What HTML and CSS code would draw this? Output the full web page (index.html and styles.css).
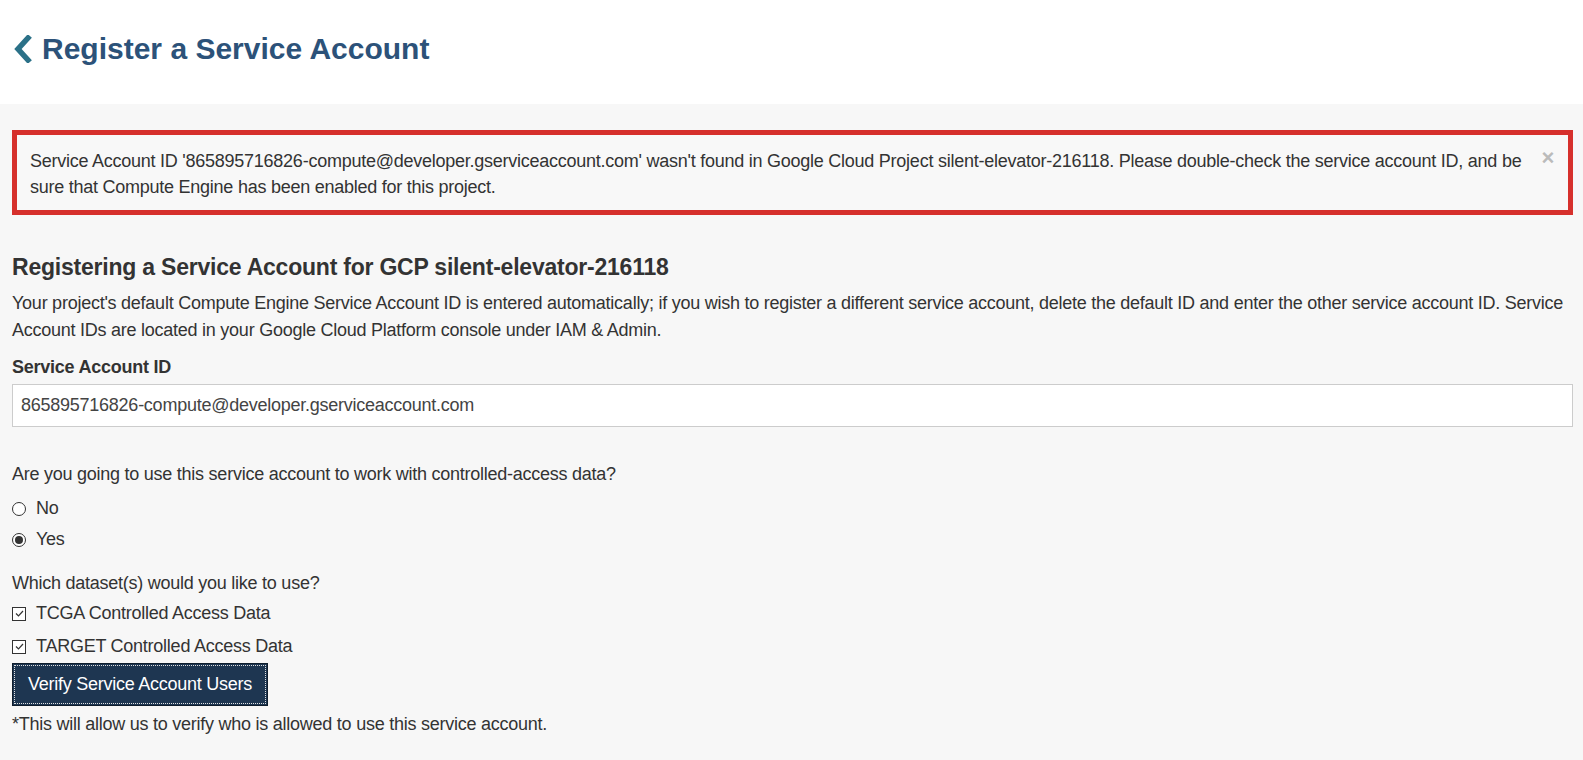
FILE: index.html
```html
<!DOCTYPE html>
<html>
<head>
<meta charset="utf-8">
<link rel="stylesheet" href="styles.css">
</head>
<body>
<header class="page-header">
  <a class="back" href="#"><svg width="20" height="28" viewBox="0 0 20 28"><polyline points="15,3 5,14 15,25" fill="none" stroke="#2b7188" stroke-width="5.5" stroke-linecap="square"/></svg></a>
  <h1 class="title">Register a Service Account</h1>
</header>
<main class="content">
  <div class="alert">
    <div class="alert-text">Service Account ID '865895716826-compute@developer.gserviceaccount.com' wasn't found in Google Cloud Project silent-elevator-216118. Please double-check the service account ID, and be sure that Compute Engine has been enabled for this project.</div>
    <span class="close">&times;</span>
  </div>
  <h2 class="section-title">Registering a Service Account for GCP silent-elevator-216118</h2>
  <p class="intro">Your project's default Compute Engine Service Account ID is entered automatically; if you wish to register a different service account, delete the default ID and enter the other service account ID. Service Account IDs are located in your Google Cloud Platform console under IAM &amp; Admin.</p>
  <label class="field-label">Service Account ID</label>
  <div class="input">865895716826-compute@developer.gserviceaccount.com</div>
  <p class="question">Are you going to use this service account to work with controlled-access data?</p>
  <div class="option first"><span class="radio"></span>No</div>
  <div class="option"><span class="radio checked"></span>Yes</div>
  <p class="question q2">Which dataset(s) would you like to use?</p>
  <div class="option"><span class="check"><svg width="11" height="11" viewBox="0 0 11 11"><polyline points="2,5.5 4.5,8 9,3" fill="none" stroke="#333" stroke-width="1.2"/></svg></span>TCGA Controlled Access Data</div>
  <div class="option last"><span class="check"><svg width="11" height="11" viewBox="0 0 11 11"><polyline points="2,5.5 4.5,8 9,3" fill="none" stroke="#333" stroke-width="1.2"/></svg></span>TARGET Controlled Access Data</div>
  <button class="btn">Verify Service Account Users</button>
  <p class="note">*This will allow us to verify who is allowed to use this service account.</p>
</main>
</body>
</html>
```
FILE: styles.css
```css
html, body {
  margin: 0;
  padding: 0;
}
body {
  background: #f7f7f7;
  font-family: "Liberation Sans", Arial, sans-serif;
  font-size: 18px;
  letter-spacing: -0.25px;
  color: #333;
}
.page-header {
  background: #fff;
  height: 104px;
  display: flex;
  align-items: center;
  padding-left: 13px;
  box-sizing: border-box;
  padding-bottom: 7px;
}
.back {
  display: flex;
  margin-right: 9px;
}
.title {
  margin: 0;
  font-size: 30px;
  letter-spacing: 0;
  font-weight: bold;
  color: #2c5279;
}
.content {
  padding: 26px 10px 20px 12px;
}
.alert {
  border: 5px solid #d6302c;
  background: #f8f8f8;
  display: flex;
  padding: 13px 14px 10px 13px;
  line-height: 26px;
}
.alert-text {
  flex: 1;
  padding-right: 4px;
}
.close {
  color: #bbb;
  font-weight: bold;
  font-size: 22px;
  line-height: 20px;
  margin-top: 0;
}
.section-title {
  margin: 39px 0 0;
  font-size: 23px;
  letter-spacing: -0.22px;
  line-height: 26px;
  font-weight: bold;
  color: #333;
}
.intro {
  margin: 10px 0 0;
  line-height: 27px;
}
.field-label {
  display: block;
  font-weight: bold;
  margin-top: 10px;
  line-height: 26px;
}
.input {
  margin-top: 4px;
  background: #fff;
  border: 1px solid #ccc;
  height: 43px;
  box-sizing: border-box;
  padding: 0 8px;
  display: flex;
  align-items: center;
  color: #444;
}
.question {
  margin: 34px 0 0;
  line-height: 26px;
}
.question.q2 {
  margin-top: 15px;
  margin-bottom: 2px;
}
.option {
  display: flex;
  align-items: center;
  height: 31px;
  gap: 10px;
}
.option.first {
  margin-top: 6px;
}
.option.last {
  height: 33px;
  padding-top: 2px;
  box-sizing: border-box;
}
.radio {
  width: 14px;
  height: 14px;
  border: 1px solid #333;
  border-radius: 50%;
  box-sizing: border-box;
  background: #fff;
  display: flex;
  align-items: center;
  justify-content: center;
}
.radio.checked::after {
  content: "";
  width: 8px;
  height: 8px;
  border-radius: 50%;
  background: #333;
}
.check {
  width: 14px;
  height: 14px;
  border: 1px solid #333;
  box-sizing: border-box;
  background: #fff;
  display: flex;
  align-items: center;
  justify-content: center;
}
.btn {
  margin: 1px 0 0 0;
  display: block;
  height: 43px;
  width: 256px;
  background: #1e3651;
  color: #fff;
  border: 1px solid #0f1d2c;
  outline: 1px dotted #e0e0e0;
  outline-offset: -3px;
  font-family: "Liberation Sans", Arial, sans-serif;
  font-size: 18px;
  letter-spacing: -0.25px;
  padding: 0;
}
.note {
  margin: 5px 0 0;
  line-height: 26px;
}
```
